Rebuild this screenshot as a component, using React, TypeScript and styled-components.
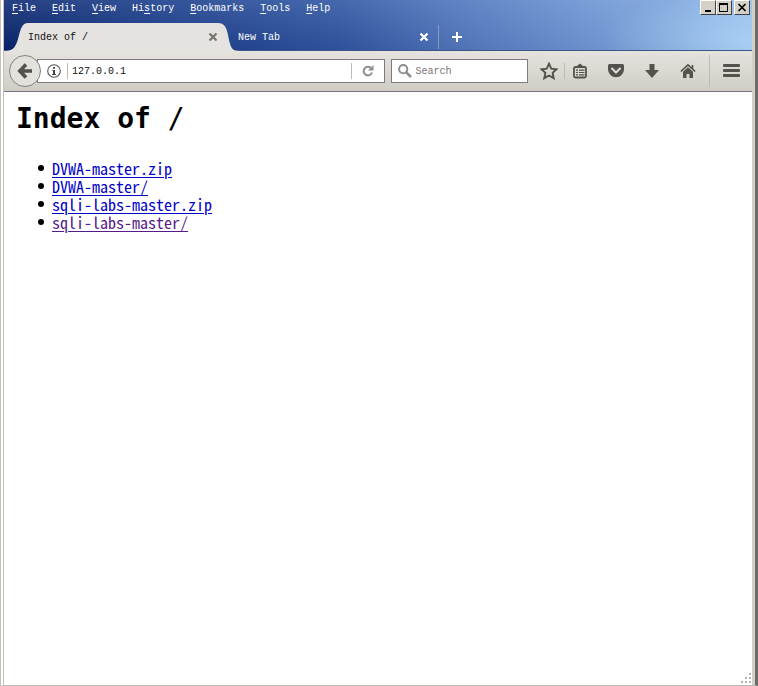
import React from "react";
import styled, { createGlobalStyle } from "styled-components";

const GlobalStyle = createGlobalStyle`
  *, *::before, *::after { box-sizing: border-box; }
  body { margin: 0; background: #fff; }
  button, input { font: inherit; color: inherit; }
  button { display: flex; align-items: center; justify-content: center; padding: 0; border: 0; background: none; }
`;

const Frame = styled.div`
  display: flex;
  flex-direction: column;
  min-height: 100vh;
  border-left: 4px double #c4c1b9;
  border-right: 3px solid #6b6b6b;
  border-bottom: 1px solid #bab8b4;
  font: 10px/14px "Liberation Mono", monospace;
  color: #111;
`;

const Chrome = styled.header`
  border-right: 3px solid #d4d0c8;
`;

const TitleArea = styled.div`
  height: 51px;
  display: flex;
  flex-direction: column;
  justify-content: space-between;
  color: #fff;
  border-bottom: 1px solid #3c5488;
  background:
    radial-gradient(ellipse 150px 50px at 100% 80%, rgba(175, 215, 250, 0.7), rgba(175, 215, 250, 0)),
    linear-gradient(180deg, rgba(150, 180, 225, 0.2), rgba(0, 20, 80, 0.08)),
    linear-gradient(94deg, #0a246a 0%, #1a3a86 20%, #3156a0 45%, #587dc0 63%, #779dd8 80%, #86ade0 90%, #a0c5f0 100%);
`;

const TopRow = styled.div`
  display: flex;
  justify-content: space-between;
  align-items: flex-start;
  padding: 0 2px 0 8px;
`;

const Menu = styled.nav`
  display: flex;
  gap: 16px;
  padding-top: 2px;
`;

const MenuItem = styled.button`
  && { line-height: 14px; }
  u { text-underline-offset: 2px; }
`;

const WindowButtons = styled.div`
  display: flex;
`;

const WindowButton = styled.button<{ $gap?: boolean }>`
  width: 16px;
  height: 15px;
  margin-left: ${(p) => (p.$gap ? 2 : 0)}px;
  && {
    background: #d4d0c8;
    border: 1px solid;
    border-color: #fff #404040 #404040 #fff;
  }
`;

const Tabs = styled.div`
  display: flex;
  height: 28px;
  margin-bottom: -1px;
`;

const ActiveTab = styled.div`
  display: flex;
  color: #111;
  width: 236px;
  flex: none;
  svg.edge { display: block; flex: none; }
`;

const TabBody = styled.div`
  flex: 1;
  display: flex;
  align-items: center;
  justify-content: space-between;
  background: #e4e3df;
`;

const InactiveTab = styled.div`
  display: flex;
  align-items: center;
  justify-content: space-between;
  flex: none;
  width: 201px;
  height: 24px;
  margin-top: 2px;
  padding-right: 9px;
  margin-left: -2px;
  border-right: 1px solid #829ac8;
`;

const TabLabel = styled.span`
  white-space: pre;
  padding-top: 2px;
`;

const NewTab = styled.button`
  width: 36px;
`;

const Toolbar = styled.div`
  display: flex;
  align-items: center;
  height: 41px;
  padding: 0 12px 0 5px;
  border-bottom: 1px solid #77747c;
  background: linear-gradient(#e6e3df, #d0cdc5);
`;

const Back = styled.button`
  width: 32px;
  height: 32px;
  flex: none;
  z-index: 1;
  && {
    border: 1px solid #85827f;
    border-radius: 50%;
    background: #e3e1dc;
  }
`;

const Field = styled.div`
  display: flex;
  align-items: center;
  height: 24px;
  background: #fff;
  border: 1px solid #7d7a84;
`;

const UrlField = styled(Field)`
  flex: 348 1 0;
  min-width: 120px;
  margin-left: -4px;
  padding: 0 10px 0 9px;
`;

const SearchField = styled(Field)`
  flex: 138 1 0;
  min-width: 80px;
  margin-left: 6px;
  padding-left: 6px;
  gap: 4px;
`;

const TextInput = styled.input`
  flex: 1;
  min-width: 0;
  border: 0;
  padding: 2px 0 0;
  outline: 0;
  background: transparent;
  &::placeholder { color: #737373; opacity: 1; }
`;

const Divider = styled.span<{ $h: number; $m: string }>`
  width: 1px;
  height: ${(p) => p.$h}px;
  margin: ${(p) => p.$m};
  background: #bdbab5;
  flex: none;
`;

const Tools = styled.div`
  display: flex;
  align-items: center;
  margin-left: 12px;
`;

const Tool = styled.button<{ $w?: number }>`
  width: ${(p) => p.$w ?? 36}px;
  height: 24px;
`;

const Page = styled.main`
  flex: 1;
  display: flex;
  flex-direction: column;
  padding: 10px 0 0 12px;
  border-right: 3px solid #d4d0c8;
  background: #fff;
  font: 16px/18px "Noto Sans Mono CJK SC", "Noto Sans CJK SC", monospace;
  color: #000;
`;

const Heading = styled.h1`
  margin: 0 0 23px;
  font: 700 28px/34px "DejaVu Sans Mono", monospace;
`;

const Slash = styled.span`
  font-weight: 400;
`;

const Listing = styled.ul`
  margin: 0;
  padding-left: 22px;
  flex: 1;
  list-style: none;
`;

const Entry = styled.li`
  display: flex;
  align-items: center;
  gap: 8px;
  height: 18px;
  &::before {
    content: "";
    width: 6px;
    height: 6px;
    border-radius: 50%;
    background: #000;
  }
`;

const FileLink = styled.a<{ $visited?: boolean }>`
  color: ${(p) => (p.$visited ? "#551a8b" : "#0000c8")};
  text-decoration: underline;
  text-decoration-thickness: 1px;
  text-underline-offset: 2px;
`;

const Grip = styled.svg`
  align-self: flex-end;
  display: block;
`;

const Cross = ({ color }: { color: string }) => (
  <svg width="10" height="10" viewBox="0 0 10 10">
    <path d="M1.5 1.5l7 7M8.5 1.5l-7 7" stroke={color} strokeWidth="2.2" />
  </svg>
);

const menus: [string, string, string][] = [
  ["", "F", "ile"],
  ["", "E", "dit"],
  ["", "V", "iew"],
  ["Hi", "s", "tory"],
  ["", "B", "ookmarks"],
  ["", "T", "ools"],
  ["", "H", "elp"],
];

const files = [
  { name: "DVWA-master.zip" },
  { name: "DVWA-master/" },
  { name: "sqli-labs-master.zip" },
  { name: "sqli-labs-master/", visited: true },
];

const ink = "#55524d";

export default function App() {
  return (
    <Frame>
      <GlobalStyle />
      <Chrome>
        <TitleArea>
          <TopRow>
            <Menu>
              {menus.map(([a, key, b]) => (
                <MenuItem key={key + b}>
                  <span>{a}<u>{key}</u>{b}</span>
                </MenuItem>
              ))}
            </Menu>
            <WindowButtons>
              <WindowButton aria-label="Minimize">
                <svg width="12" height="11" viewBox="0 0 12 11"><path d="M3 8h6v2H3z" /></svg>
              </WindowButton>
              <WindowButton aria-label="Maximize">
                <svg width="12" height="11" viewBox="0 0 12 11" shapeRendering="crispEdges">
                  <path fillRule="evenodd" d="M1 1h9v9H1zM2 3v6h7V3z" />
                </svg>
              </WindowButton>
              <WindowButton aria-label="Close" $gap>
                <svg width="12" height="11" viewBox="0 0 12 11"><path d="M2.5 2l7 7M9.5 2l-7 7" stroke="#000" strokeWidth="1.7" /></svg>
              </WindowButton>
            </WindowButtons>
          </TopRow>
          <Tabs>
            <ActiveTab>
              <svg className="edge" width="24" height="28" viewBox="0 0 24 28">
                <path d="M0 28C8 28 11 26 14 16C17 5 18 0 24 0V28Z" fill="#e4e3df" />
              </svg>
              <TabBody>
                <TabLabel>Index of /</TabLabel>
                <button aria-label="Close Index of /"><Cross color="#777670" /></button>
              </TabBody>
              <svg className="edge" width="22" height="28" viewBox="0 0 22 28">
                <path d="M22 28C14 28 13 25 11 17C9 5 7 0 0 0V28Z" fill="#e4e3df" />
              </svg>
            </ActiveTab>
            <InactiveTab>
              <TabLabel>New Tab</TabLabel>
              <button aria-label="Close New Tab"><Cross color="#fff" /></button>
            </InactiveTab>
            <NewTab aria-label="Open a new tab">
              <svg width="10" height="10" viewBox="0 0 10 10"><path d="M0 5h10M5 0v10" stroke="#fff" strokeWidth="2" /></svg>
            </NewTab>
          </Tabs>
        </TitleArea>
        <Toolbar>
          <Back aria-label="Back">
            <svg width="16" height="16" viewBox="0 0 16 16" fill="none" stroke={ink} strokeWidth="3.6">
              <path d="M15 8H3M9 1.5L2.800 8L9 14.5" />
            </svg>
          </Back>
          <UrlField>
            <svg width="14" height="14" viewBox="0 0 14 14">
              <circle cx="7" cy="7" r="6.3" fill="none" stroke="#555" strokeWidth="1.1" />
              <path d="M6 3h2v1.8H6zM5.5 6H8v4h1v1H5v-1h1V7h-.5z" fill="#444" />
            </svg>
            <Divider $h={16} $m="0 4px 0 6px" />
            <TextInput aria-label="Address" defaultValue="127.0.0.1" />
            <Divider $h={16} $m="0 10px 0 0" />
            <button aria-label="Reload">
              <svg width="12" height="12" viewBox="0 0 12 12">
                <path d="M9.2 3.2A4.3 4.3 0 1 0 10 7.5" fill="none" stroke="#8d8d92" strokeWidth="2" />
                <path d="M11.5 0v5.5H6z" fill="#8d8d92" />
              </svg>
            </button>
          </UrlField>
          <SearchField>
            <svg width="14" height="14" viewBox="0 0 14 14" fill="none" stroke="#8d8d92">
              <circle cx="5.2" cy="5.2" r="4.1" strokeWidth="2" />
              <path d="M8.3 8.3L13 13" strokeWidth="2.6" />
            </svg>
            <TextInput aria-label="Search" placeholder="Search" />
          </SearchField>
          <Tools>
            <Tool aria-label="Bookmark this page" $w={18}>
              <svg width="18" height="18" viewBox="0 0 16 16" fill="none" stroke={ink} strokeWidth="1.7">
                <path d="M8 1.5l2 4.4 4.7.5-3.5 3.2 1 4.8L8 12l-4.2 2.4 1-4.8L1.300 6.400 6 5.900z" />
              </svg>
            </Tool>
            <Divider $h={16} $m="0 0 0 6px" />
            <Tool aria-label="Bookmarks" $w={30}>
              <svg width="16" height="16" viewBox="0 0 16 16" fill="none" stroke={ink}>
                <rect x="2" y="4" width="12" height="10.5" rx="1.5" strokeWidth="1.8" />
                <path d="M5 3.500L8 1l3 2.500z" fill={ink} />
                <path d="M4 7.200h2M7 7.200h5.500M4 9.500h2M7 9.500h5.500M4 11.800h2M7 11.800h5.500" strokeWidth="1.200" />
              </svg>
            </Tool>
            <Tool aria-label="Pocket" $w={42}>
              <svg width="16" height="16" viewBox="0 0 16 16">
                <path d="M1.500 1h13Q16 1 16 2.500V6.500a8 7.800 0 0 1-16 0V2.500Q0 1 1.500 1z" fill={ink} />
                <path d="M4 5.500l4 4 4-4" fill="none" stroke="#e0ded8" strokeWidth="2" strokeLinecap="round" />
              </svg>
            </Tool>
            <Tool aria-label="Downloads" $w={30}>
              <svg width="16" height="16" viewBox="0 0 16 16"><path d="M5.500 1h5v6H15L8 15 1 7h4.500z" fill={ink} /></svg>
            </Tool>
            <Tool aria-label="Home" $w={42}>
              <svg width="16" height="16" viewBox="0 0 16 16">
                <path d="M.8 8.500L8 1.800l7.200 6.700M12.500 2v4" fill="none" stroke={ink} strokeWidth="1.700" />
                <path d="M3 8.800L8 4.300l5 4.500V15H9.500v-4h-3v4H3z" fill={ink} />
              </svg>
            </Tool>
            <Divider $h={32} $m="0 12px 0 0" />
            <Tool aria-label="Open menu" $w={18}>
              <svg width="17" height="14" viewBox="0 0 17 14" fill={ink}>
                <rect width="17" height="3" rx="1" /><rect y="5" width="17" height="3" rx="1" /><rect y="10" width="17" height="3" rx="1" />
              </svg>
            </Tool>
          </Tools>
        </Toolbar>
      </Chrome>
      <Page>
        <Heading>Index of <Slash>/</Slash></Heading>
        <Listing>
          {files.map((f) => (
            <Entry key={f.name}>
              <FileLink href={"#" + f.name} $visited={f.visited}>{f.name}</FileLink>
            </Entry>
          ))}
        </Listing>
        <Grip width="12" height="12" viewBox="0 0 12 12" fill="#b5b3ae">
          <path d="M9 0h2v2H9zM5 4h2v2H5zM9 4h2v2H9zM1 8h2v2H1zM5 8h2v2H5zM9 8h2v2H9z" />
        </Grip>
      </Page>
    </Frame>
  );
}
